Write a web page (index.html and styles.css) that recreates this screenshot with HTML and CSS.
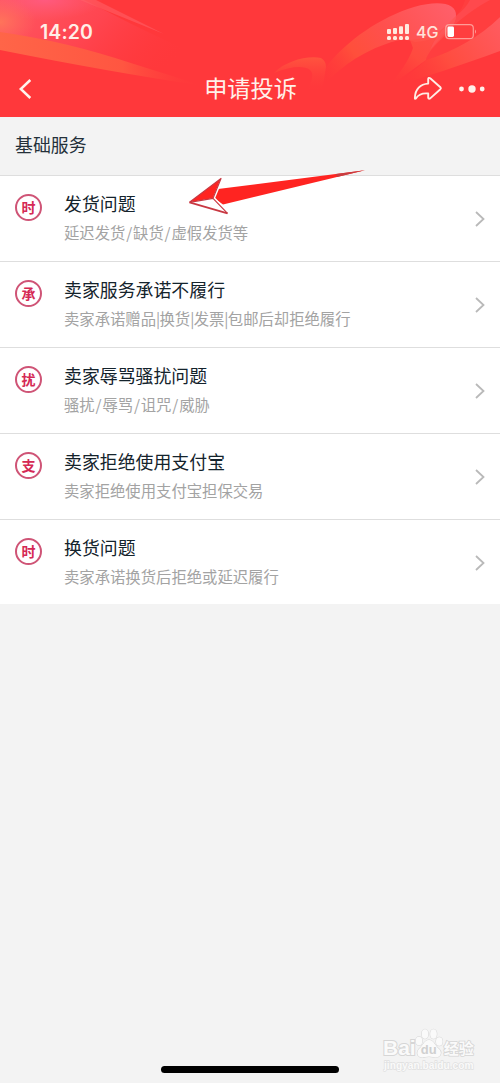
FILE: index.html
```html
<!DOCTYPE html>
<html lang="zh-CN">
<head>
<meta charset="utf-8">
<title>申请投诉</title>
<link rel="stylesheet" href="styles.css">
</head>
<body>
<header class="header">
  <svg class="header-art" viewBox="0 0 500 117" preserveAspectRatio="none" aria-hidden="true">
    <defs>
      <linearGradient id="wash" x1="0" y1="0" x2="1" y2="0.3"><stop offset="0" stop-color="#ff5864"/><stop offset=".5" stop-color="#ff4550"/><stop offset="1" stop-color="#ff383b" stop-opacity="0"/></linearGradient>
      <linearGradient id="orange" gradientUnits="userSpaceOnUse" x1="0" y1="0" x2="204" y2="0"><stop offset="0" stop-color="#ff6548"/><stop offset=".6" stop-color="#ff5641"/><stop offset="1" stop-color="#ff383b" stop-opacity="0"/></linearGradient>
      <linearGradient id="ribbon" gradientUnits="userSpaceOnUse" x1="450" y1="5" x2="335" y2="95"><stop offset="0" stop-color="#ff6672"/><stop offset=".45" stop-color="#ff5450"/><stop offset=".72" stop-color="#ff533b"/><stop offset="1" stop-color="#ff3b38" stop-opacity="0"/></linearGradient>
      <linearGradient id="neck" gradientUnits="userSpaceOnUse" x1="440" y1="30" x2="395" y2="88"><stop offset="0" stop-color="#ff5450"/><stop offset=".5" stop-color="#ff4f3f"/><stop offset="1" stop-color="#ff3b38" stop-opacity="0"/></linearGradient>
      <linearGradient id="tail" x1="0" y1="0" x2="0" y2="1"><stop offset="0" stop-color="#ff5a3f"/><stop offset="1" stop-color="#ff383b" stop-opacity="0"/></linearGradient>
      <linearGradient id="fold" gradientUnits="userSpaceOnUse" x1="500" y1="20" x2="410" y2="85"><stop offset="0" stop-color="#ff6a70"/><stop offset=".6" stop-color="#ff5541"/><stop offset="1" stop-color="#ff4438" stop-opacity="0"/></linearGradient>
      <radialGradient id="glow"><stop offset="0" stop-color="#ff7c58" stop-opacity=".8"/><stop offset="1" stop-color="#ff7060" stop-opacity="0"/></radialGradient>
      <radialGradient id="pink"><stop offset="0" stop-color="#ff5c88" stop-opacity=".8"/><stop offset="1" stop-color="#ff5c78" stop-opacity="0"/></radialGradient>
    </defs>
    <path d="M0 0H84C124 20 166 42 214 62Q160 84 0 34Z" fill="url(#wash)"/>
    <ellipse cx="45" cy="0" rx="58" ry="20" fill="url(#pink)"/>
    <ellipse cx="0" cy="22" rx="36" ry="25" fill="url(#glow)"/>
    <path d="M0 32Q65 41 134 64L204 86Q110 72 0 50Z" fill="url(#orange)"/>
    <path d="M80 0H96L164 34Z" fill="#ff626a" opacity=".55"/>
    <path d="M274 73C285 61 308 55 321 58Q326 61 326 67L322 92H306Q316 75 310 70Q300 63 274 73Z" fill="url(#tail)" opacity=".85"/>
    <path d="M326 67C347 40 381 17 414 7C439 0 457 3 456 16C455 30 438 40 415 42C405 38 397 40 386 44C357 54 334 72 318 92Z" fill="url(#ribbon)" opacity=".85"/>
    <path d="M456 16C455 33 430 44 426 60L386 89Q407 66 413 48L410 40Q438 38 456 16Z" fill="url(#neck)" opacity=".8"/>
    <path d="M426 60Q470 46 500 17V51C462 65 422 78 386 89Q412 74 426 60Z" fill="url(#fold)" opacity=".7"/>
    <path d="M465 0H500V17Q470 46 426 60Q431 37 456 16Q463 8 465 0Z" fill="#ff4a48" opacity=".35"/>
    <path d="M470 0H490Q458 17 430 50Q436 34 456 16Q466 8 470 0Z" fill="#ff656d" opacity=".3"/>
  </svg>
  <div class="status">
    <span class="clock">14:20</span>
    <div class="indicators">
      <svg class="signal" width="23" height="17" viewBox="0 0 23 17" fill="#ffe9df"><rect y="5" width="4" height="5" rx="1"/><rect x="6" y="4" width="4" height="6" rx="1"/><rect x="12" y="2.3" width="4" height="7.7" rx="1"/><rect x="18" width="4" height="10" rx="1"/><rect y="12" width="4" height="4" rx="1.5"/><rect x="6" y="12" width="4" height="4" rx="1.5"/><rect x="12" y="12" width="4" height="4" rx="1.5"/><rect x="18" y="12" width="4" height="4" rx="1.5"/></svg>
      <span class="network">4G</span>
      <svg class="battery" width="32" height="16" viewBox="0 0 32 16"><rect x=".7" y=".7" width="27.6" height="14" rx="3.5" fill="none" stroke="#ff9c97" stroke-width="1.2"/><rect x="2.5" y="2.6" width="6.5" height="10.3" rx="1.4" fill="#fff"/><path d="M30 5.5Q32 7.7 30 9.8Z" fill="#ff9c97"/></svg>
    </div>
  </div>
  <nav class="nav">
    <svg class="back" width="14" height="22" viewBox="0 0 14 22"><path d="M12.3 2L2.8 11L12.3 20" fill="none" stroke="#fff3ed" stroke-width="2.5"/></svg>
    <h1 class="nav-title">申请投诉</h1>
    <div class="actions">
      <svg width="30" height="25" viewBox="0 0 30 25"><path d="M15.2 3Q15.6 1.2 17.2 2.3L27.4 11.2Q28.4 12.2 27.4 13.2L17.2 22.4Q15.5 23.4 15.2 21.6V17.5C9 16.9 5.3 18.5 2.9 22.5Q1.7 23.3 1.9 21.6C2.2 13.4 7.3 8 15.2 7.6Z" fill="none" stroke="#ffede5" stroke-width="1.9" stroke-linejoin="round"/></svg>
      <svg width="28" height="8" viewBox="0 0 28 8" fill="#fff0e9"><circle cx="3.5" cy="4" r="2.4"/><circle cx="14" cy="4" r="3.7"/><circle cx="24.2" cy="4" r="2.4"/></svg>
    </div>
  </nav>
</header>
<main>
  <h2 class="section-title">基础服务</h2>
  <ul class="list">
    <li class="row"><span class="badge">时</span><div class="copy"><h3>发货问题</h3><p>延迟发货<i>/</i>缺货<i>/</i>虚假发货等</p></div><svg class="chevron" viewBox="0 0 10 16"><path d="M1 1L8.5 8L1 15"/></svg></li>
    <li class="row"><span class="badge">承</span><div class="copy"><h3>卖家服务承诺不履行</h3><p>卖家承诺赠品<s>|</s>换货<s>|</s>发票<s>|</s>包邮后却拒绝履行</p></div><svg class="chevron" viewBox="0 0 10 16"><path d="M1 1L8.5 8L1 15"/></svg></li>
    <li class="row"><span class="badge">扰</span><div class="copy"><h3>卖家辱骂骚扰问题</h3><p>骚扰<i>/</i>辱骂<i>/</i>诅咒<i>/</i>威胁</p></div><svg class="chevron" viewBox="0 0 10 16"><path d="M1 1L8.5 8L1 15"/></svg></li>
    <li class="row"><span class="badge">支</span><div class="copy"><h3>卖家拒绝使用支付宝</h3><p>卖家拒绝使用支付宝担保交易</p></div><svg class="chevron" viewBox="0 0 10 16"><path d="M1 1L8.5 8L1 15"/></svg></li>
    <li class="row"><span class="badge">时</span><div class="copy"><h3>换货问题</h3><p>卖家承诺换货后拒绝或延迟履行</p></div><svg class="chevron" viewBox="0 0 10 16"><path d="M1 1L8.5 8L1 15"/></svg></li>
  </ul>
</main>
<svg class="pointer" width="182" height="50" viewBox="0 0 182 50" aria-hidden="true">
  <path d="M32 19L179 0.3L37 34.5L28 28Z" fill="#ff2421"/>
  <path d="M150 4L179 .3L151 7Z" fill="#c63d40"/>
  <path d="M3.5 32.3L35 8.5L27 28.3Z" fill="#ff2421"/>
  <path d="M3.5 32.3L27 28.3L41.5 43.3Z" fill="#fff"/>
  <path d="M35.8 9L28 28L42 43" fill="none" stroke="#fff" stroke-width="2.2"/>
  <path d="M3.5 32.3L35 8.5L27 28.3L41.5 43.3M3.5 32.3L27 28.3" fill="none" stroke="#c83842" stroke-width="1.2" stroke-linejoin="round"/>
  <path d="M3.5 32.3L41.5 43.3" stroke="#c83842" stroke-width="1.8"/>
</svg>
<div class="watermark">
  <div class="brand"><span>Bai</span><span class="paw"><svg width="28" height="31" viewBox="0 0 28 31"><ellipse cx="4" cy="13" rx="3.3" ry="4.3"/><ellipse cx="10" cy="6" rx="3.3" ry="4.8"/><ellipse cx="18.5" cy="6" rx="3.3" ry="4.8"/><ellipse cx="24.3" cy="13.5" rx="3.3" ry="4.3"/><path d="M14 12C9 12 8 18 4 21C0 26 4 31 10 29Q14 28 18 29C25 31 28 25 24 21C20 18 19 12 14 12Z"/></svg><b>du</b></span><span class="exp">经验</span></div>
  <div class="site">jingyan.baidu.com</div>
</div>
<div class="home-indicator"></div>
</body>
</html>
```
FILE: styles.css
```css
* { box-sizing: border-box; }
body {
  margin: 0;
  height: 1083px;
  position: relative;
  overflow: hidden;
  background: #f3f3f3;
  font-family: Inter, "Noto Sans CJK SC", sans-serif;
}
h1, h2, h3, p, ul { margin: 0; padding: 0; font-weight: 400; }
svg { display: block; flex-shrink: 0; }
.header { position: relative; height: 117px; background: #ff383b; }
.header-art { position: absolute; inset: 0; width: 100%; height: 100%; }
.status, .nav { position: relative; display: flex; align-items: center; justify-content: space-between; }
.status { height: 64px; padding: 0 23px 0 40px; }
.clock { color: #ffeee7; font-size: 19.5px; font-weight: 600; letter-spacing: .1px; }
.indicators { display: flex; align-items: center; }
.signal { margin-right: 6px; }
.network { color: #ffe3db; font-size: 16px; font-weight: 500; width: 29px; }
.nav { height: 49px; padding: 0 14px 0 18px; }
.nav-title { color: #fff0e9; font: 400 23.2px/34px "Noto Sans CJK SC", sans-serif; margin: -4px 0 0 56px; }
.actions { display: flex; align-items: center; gap: 15px; }
.section-title { height: 58px; padding-left: 15px; color: #24303a; font: 400 17.9px/55px "Noto Sans CJK SC", sans-serif; }
.list { list-style: none; background: #fff; }
.row { display: flex; height: 86px; padding: 0 15px; border-top: 1px solid #dedede; }
.row:last-child { height: 85px; }
.badge {
  display: flex; align-items: center; justify-content: center;
  width: 27px; height: 27px; margin: 18px 22px 0 0; padding-bottom: 1px;
  border: 2px solid #cf5476; border-radius: 50%;
  color: #d52955; font: 700 14px/20px "Noto Sans CJK SC", sans-serif;
}
.copy { flex: 1; padding-top: 13px; font-family: "Noto Sans CJK SC", sans-serif; white-space: nowrap; }
.copy h3 { font-size: 17.9px; line-height: 28px; color: #14232c; }
.copy p { font-size: 15.35px; line-height: 24px; margin-top: 3px; color: #a3a3a3; }
.copy i { font-style: normal; padding: 0 .85px; }
.copy s { text-decoration: none; letter-spacing: -.7px; }
.chevron { width: 10px; height: 16px; margin-top: 35px; fill: none; stroke: #b9b9b9; stroke-width: 1.8; }
.pointer { position: absolute; left: 186px; top: 170px; }
.watermark { position: absolute; left: 383px; top: 1028px; width: 94px; color: #fafafa; }
.watermark span, .site { paint-order: stroke fill; }
.brand { display: flex; align-items: flex-end; height: 32px; font: 700 21px/25px "Liberation Sans", sans-serif; -webkit-text-stroke: 2px #d6d6d6; }
.paw { position: relative; display: block; width: 26px; height: 32px; margin-right: 2px; }
.paw svg { width: 28px; height: 31px; margin-left: -1px; fill: #fafafa; stroke: #d6d6d6; stroke-width: 1.1; }
.paw b { position: absolute; left: 5px; top: 14px; font-size: 13px; line-height: 16px; color: #d0d0d0; -webkit-text-stroke: 0; }
.exp { font: 700 15px/25px "Noto Sans CJK SC", sans-serif; -webkit-text-stroke: 1.6px #d6d6d6; }
.site { padding-left: 1px; font: 700 10.2px/11px "Liberation Sans", sans-serif; -webkit-text-stroke: 1.3px #e0e0e0; }
.home-indicator { position: absolute; left: 161px; top: 1066px; width: 178px; height: 7px; border-radius: 4px; background: #000; }
```
